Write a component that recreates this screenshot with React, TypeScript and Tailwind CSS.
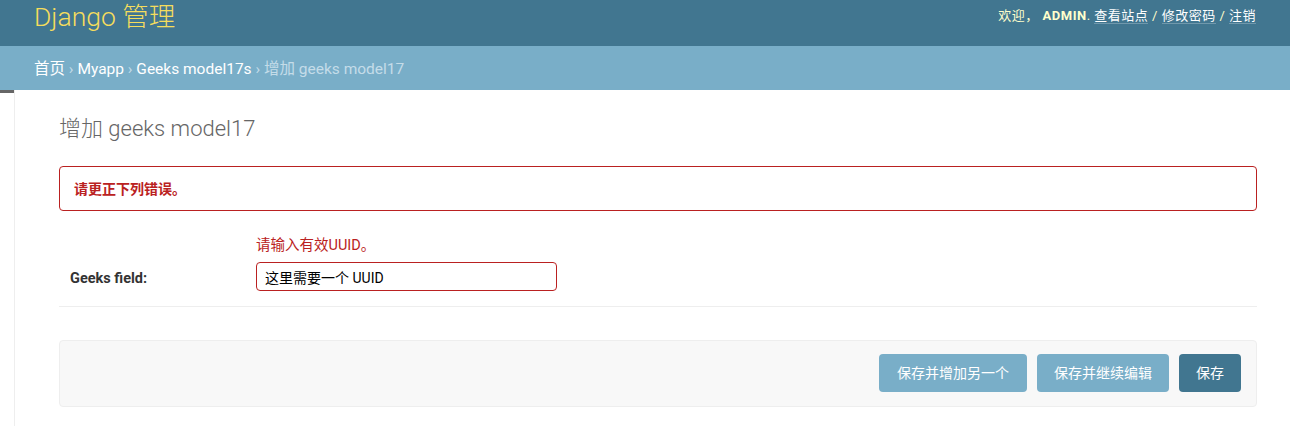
import React from 'react';

const FONT = 'font-[family-name:Roboto,"Noto_Sans_CJK_SC",sans-serif]';

function Header() {
  return (
    <div className="h-[46px] bg-[#417690] flex items-start justify-between pl-[34px] pr-[34px]">
      <div className="pt-[2px] text-[26.5px] leading-[30px] font-light text-[#f5dd5d]">Django 管理</div>
      <div className="pt-[7px] text-[13px] leading-[18px] text-[#ffc] tracking-[0.5px]">
        欢迎， <strong className="font-bold uppercase">admin</strong>.{' '}
        <a className="text-white border-b border-white/25">查看站点</a> /{' '}
        <a className="text-white border-b border-white/25">修改密码</a> /{' '}
        <a className="text-white border-b border-white/25">注销</a>
      </div>
    </div>
  );
}

function Breadcrumbs() {
  return (
    <div className="h-[44px] bg-[#79aec8] pl-[34px] pt-[13px] text-[15.5px] leading-[20px] text-[#c4dce8]">
      <a className="text-white">首页</a> › <a className="text-white">Myapp</a> ›{' '}
      <a className="text-white">Geeks model17s</a> › 增加 geeks model17
    </div>
  );
}

export default function App() {
  return (
    <div className={`${FONT} min-h-screen flex flex-col bg-white`}>
      <Header />
      <Breadcrumbs />
      <div className="flex flex-1">
        {/* sidebar toggle */}
        <div className="w-[15px] border-r border-[#eee]">
          <div className="h-[3px] w-[14px] bg-[#666]" />
        </div>

        <div className="flex-1 pl-[44px] pr-[33px] pt-[26px]">
          <h1 className="text-[22px] leading-[26px] font-light text-[#666]">增加 geeks model17</h1>

          <div className="mt-[24px] h-[45px] border border-[#ba2121] rounded-[4px] flex items-center pl-[14px] text-[14px] leading-[20px] font-bold text-[#ba2121]">
            请更正下列错误。
          </div>

          <div className="mt-[17px] pt-[10px] pb-[15px] border-b border-[#eee]">
            <div className="ml-[197px] text-[14.5px] leading-[16px] text-[#ba2121]">请输入有效UUID。</div>
            <div className="flex items-start mt-[8px]">
              <label className="w-[197px] pl-[11px] mt-[9px] text-[14.5px] leading-[16px] font-bold text-[#333]">
                Geeks field:
              </label>
              <input
                type="text"
                defaultValue="这里需要一个 UUID"
                className="w-[301px] h-[29px] border border-[#ba2121] rounded-[4px] px-[8px] text-[14px] text-black outline-none"
              />
            </div>
          </div>

          <div className="mt-[33px] bg-[#f8f8f8] border border-[#eee] rounded-[4px] pt-[13px] pb-[14px] px-[15px] flex justify-end gap-[10px]">
            <button className="h-[38px] px-[18px] rounded-[4px] bg-[#79aec8] text-white text-[14px]">保存并增加另一个</button>
            <button className="h-[38px] px-[17px] rounded-[4px] bg-[#79aec8] text-white text-[14px]">保存并继续编辑</button>
            <button className="h-[38px] px-[17px] rounded-[4px] bg-[#417690] text-white text-[14px]">保存</button>
          </div>
        </div>
      </div>
    </div>
  );
}
